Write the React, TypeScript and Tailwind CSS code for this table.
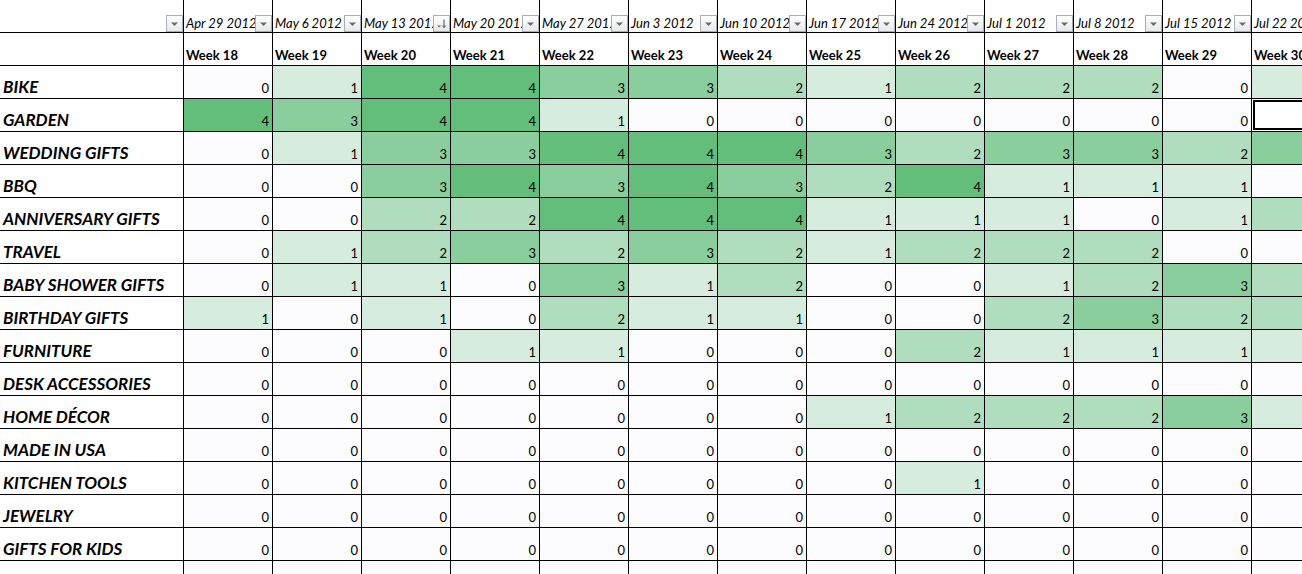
import React from "react";

const dates = [
  "Apr 29 2012",
  "May 6 2012",
  "May 13 2012",
  "May 20 2012",
  "May 27 2012",
  "Jun 3 2012",
  "Jun 10 2012",
  "Jun 17 2012",
  "Jun 24 2012",
  "Jul 1 2012",
  "Jul 8 2012",
  "Jul 15 2012",
  "Jul 22 2012",
];

const weeks = Array.from({ length: 13 }, (_, i) => `Week ${18 + i}`);

const rows: { name: string; values: (number | null)[] }[] = [
  { name: "BIKE", values: [0, 1, 4, 4, 3, 3, 2, 1, 2, 2, 2, 0, 1] },
  { name: "GARDEN", values: [4, 3, 4, 4, 1, 0, 0, 0, 0, 0, 0, 0, null] },
  { name: "WEDDING GIFTS", values: [0, 1, 3, 3, 4, 4, 4, 3, 2, 3, 3, 2, 3] },
  { name: "BBQ", values: [0, 0, 3, 4, 3, 4, 3, 2, 4, 1, 1, 1, 0] },
  { name: "ANNIVERSARY GIFTS", values: [0, 0, 2, 2, 4, 4, 4, 1, 1, 1, 0, 1, 2] },
  { name: "TRAVEL", values: [0, 1, 2, 3, 2, 3, 2, 1, 2, 2, 2, 0, 0] },
  { name: "BABY SHOWER GIFTS", values: [0, 1, 1, 0, 3, 1, 2, 0, 0, 1, 2, 3, 2] },
  { name: "BIRTHDAY GIFTS", values: [1, 0, 1, 0, 2, 1, 1, 0, 0, 2, 3, 2, 2] },
  { name: "FURNITURE", values: [0, 0, 0, 1, 1, 0, 0, 0, 2, 1, 1, 1, 1] },
  { name: "DESK ACCESSORIES", values: [0, 0, 0, 0, 0, 0, 0, 0, 0, 0, 0, 0, 0] },
  { name: "HOME DÉCOR", values: [0, 0, 0, 0, 0, 0, 0, 1, 2, 2, 2, 3, 1] },
  { name: "MADE IN USA", values: [0, 0, 0, 0, 0, 0, 0, 0, 0, 0, 0, 0, 0] },
  { name: "KITCHEN TOOLS", values: [0, 0, 0, 0, 0, 0, 0, 0, 1, 0, 0, 0, 0] },
  { name: "JEWELRY", values: [0, 0, 0, 0, 0, 0, 0, 0, 0, 0, 0, 0, 0] },
  { name: "GIFTS FOR KIDS", values: [0, 0, 0, 0, 0, 0, 0, 0, 0, 0, 0, 0, 0] },
];

const bg: Record<number, string> = {
  0: "bg-[#FCFCFF]",
  1: "bg-[#D6ECDE]",
  2: "bg-[#B0DDBD]",
  3: "bg-[#89CE9C]",
  4: "bg-[#63BE7B]",
};

function DropButton({ sorted = false }: { sorted?: boolean }) {
  return (
    <div className="absolute right-0 bottom-0 w-[17px] h-[17px] border border-[#A9AEB6] bg-gradient-to-b from-[#FFFFFF] to-[#E6E8EC] flex items-center justify-center">
      {sorted ? (
        <svg width="13" height="13" viewBox="0 0 13 13">
          <path d="M2 8.5 L6 8.5 L4 10.5 Z" fill="#6B6B6B" />
          <path d="M9 2.5 L9 10.5 M7.2 8.6 L9 10.5 L10.8 8.6" stroke="#4B4B4B" strokeWidth="1" fill="none" />
        </svg>
      ) : (
        <svg width="9" height="6" viewBox="0 0 9 6">
          <path d="M1 1.5 L8 1.5 L4.5 5 Z" fill="#6B6B6B" />
        </svg>
      )}
    </div>
  );
}

export default function App() {
  const cell = "border-r border-b border-black h-[33px] relative overflow-hidden";
  return (
    <div className="w-[1302px] h-[574px] overflow-hidden bg-white font-['Lato',sans-serif] text-black">
      <div className="grid grid-cols-[184px_repeat(13,89px)] w-max">
        {/* header row 1 */}
        <div className={`${cell} bg-white`}>
          <DropButton />
        </div>
        {dates.map((d, i) => (
          <div key={d} className={`${cell} bg-white`}>
            <div className="absolute left-[2px] bottom-[2px] italic text-[13px] leading-none whitespace-nowrap">
              {d}
            </div>
            {i < 12 && <DropButton sorted={i === 2} />}
          </div>
        ))}
        {/* header row 2 */}
        <div className={`${cell} bg-white`} />
        {weeks.map((w) => (
          <div key={w} className={`${cell} bg-white flex items-end pl-[2px] pb-[3px]`}>
            <span className="font-bold text-[13px] leading-none whitespace-nowrap">{w}</span>
          </div>
        ))}
        {/* data rows */}
        {rows.map((r) => (
          <React.Fragment key={r.name}>
            <div className={`${cell} bg-white flex items-end pl-[3px] pb-[3px]`}>
              <span className="font-bold italic text-[17px] leading-none whitespace-nowrap">{r.name}</span>
            </div>
            {r.values.map((v, i) =>
              v === null ? (
                <div
                  key={i}
                  className={`${cell} bg-white shadow-[inset_0_0_0_1px_#FFFFFF,inset_0_0_0_3px_#000000]`}
                />
              ) : (
                <div key={i} className={`${cell} ${bg[v]} flex items-end justify-end pr-[3px] pb-[3px]`}>
                  <span className="text-[13px] leading-none">{v}</span>
                </div>
              )
            )}
          </React.Fragment>
        ))}
        {/* partial trailing row */}
        <div className="border-r border-black h-[20px] bg-white" />
        {weeks.map((w) => (
          <div key={w + "x"} className="border-r border-black h-[20px] bg-[#FCFCFF]" />
        ))}
      </div>
    </div>
  );
}
